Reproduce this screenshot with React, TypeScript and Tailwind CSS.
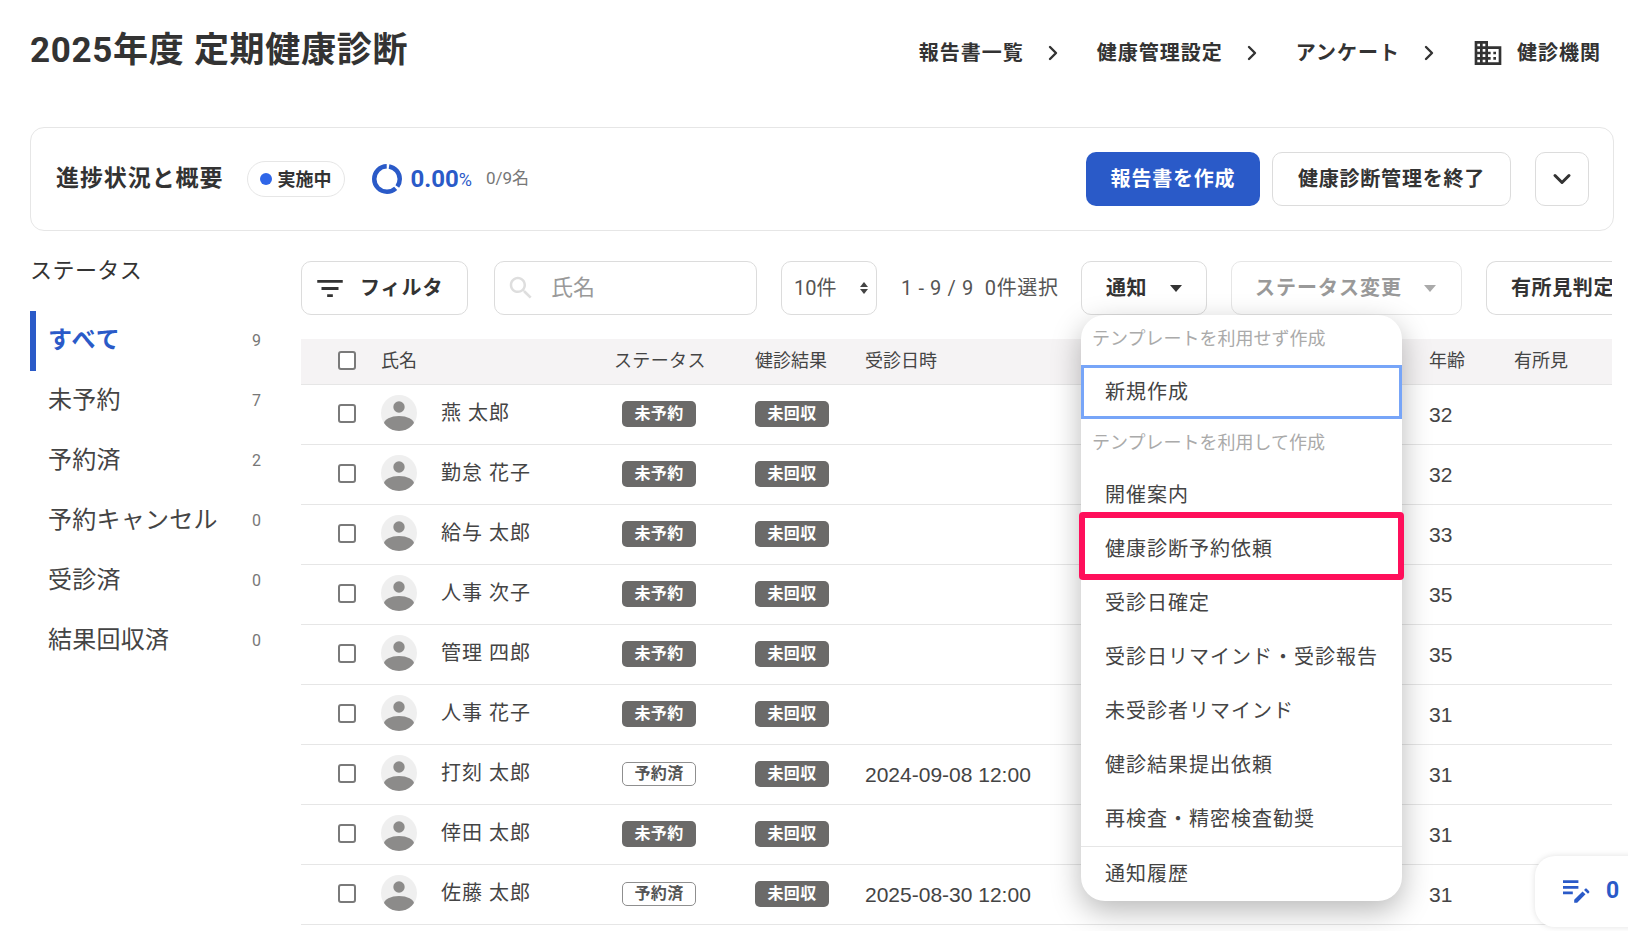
import React from 'react';
import { ChevronDown, ChevronRight } from 'lucide-react';

const sidebarItems = [
    { label: 'すべて', count: 9, active: true },
    { label: '未予約', count: 7 },
    { label: '予約済', count: 2 },
    { label: '予約キャンセル', count: 0 },
    { label: '受診済', count: 0 },
    { label: '結果回収済', count: 0 },
];

const rows = [
    { name: '燕 太郎', booked: false, date: '', age: 32 },
    { name: '勤怠 花子', booked: false, date: '', age: 32 },
    { name: '給与 太郎', booked: false, date: '', age: 33 },
    { name: '人事 次子', booked: false, date: '', age: 35 },
    { name: '管理 四郎', booked: false, date: '', age: 35 },
    { name: '人事 花子', booked: false, date: '', age: 31 },
    { name: '打刻 太郎', booked: true, date: '2024-09-08 12:00', age: 31 },
    { name: '倖田 太郎', booked: false, date: '', age: 31 },
    { name: '佐藤 太郎', booked: true, date: '2025-08-30 12:00', age: 31 },
];

const gridCols = 'grid grid-cols-[80px_60px_165px_106px_153px_564px_85px_1fr] items-center';

const Caret = ({ className }: { className: string }) => (
    <span className={`w-0 h-0 border-x-[6px] border-x-transparent border-t-[7px] ${className}`} />
);

const Checkbox = ({ className = '' }: { className?: string }) => (
    <span className={`block ml-[37px] w-[18px] h-[19px] rounded-[3px] border-2 border-[#7a7a7a] bg-white ${className}`} />
);

const Avatar = () => (
    <svg viewBox="0 0 36 36" className="w-[36px] h-[36px] -mt-[2px]">
        <defs>
            <clipPath id="avatar-clip">
                <circle cx="18" cy="18" r="18" />
            </clipPath>
        </defs>
        <circle cx="18" cy="18" r="18" fill="#efefef" />
        <g clipPath="url(#avatar-clip)" fill="#8c8b8a">
            <circle cx="18" cy="12" r="5.7" />
            <ellipse cx="18" cy="28.5" rx="15" ry="7.5" />
        </g>
    </svg>
);

const Badge = ({ label, outline }: { label: string; outline?: boolean }) =>
    outline ? (
        <span className="flex items-center justify-center w-[74px] h-[24px] rounded-[5px] border border-[#8f8f8f] bg-white text-[#555] text-[16px] font-bold tracking-[0.02em]">
            {label}
        </span>
    ) : (
        <span className="flex items-center justify-center w-[74px] h-[26px] rounded-[5px] bg-[#6b6a69] text-white text-[16px] font-bold tracking-[0.02em]">
            {label}
        </span>
    );

const NavLink = ({ label }: { label: string }) => (
    <div className="flex items-center gap-[17px]">
        <span className="text-[20px] font-bold tracking-[0.05em] text-[#333]">{label}</span>
        <ChevronRight className="w-[24px] h-[24px] text-[#333] mr-[32px]" strokeWidth={2.4} />
    </div>
);

const MenuItem = ({ label }: { label: string }) => (
    <div className="flex items-center h-[54px] pl-[24px] text-[20px] text-[#444] tracking-[0.05em]">{label}</div>
);

export default function App() {
    return (
        <div className="relative w-[1628px] h-[931px] overflow-hidden bg-white text-[#333] font-['Roboto','Noto_Sans_CJK_JP',sans-serif]">
            <header className="flex items-center justify-between h-[100px] pl-[30px] pr-[27px]">
                <h1 className="mt-[2px] text-[35px] font-bold tracking-[0.02em]">2025年度 定期健康診断</h1>
                <nav className="flex items-center mt-[5px]">
                    <NavLink label="報告書一覧" />
                    <NavLink label="健康管理設定" />
                    <NavLink label="アンケート" />
                    <svg viewBox="0 0 24 24" className="w-[32px] h-[32px] -ml-[1px] mr-[13px]" fill="#333">
                        <path d="M12 7V3H2v18h20V7H12zM6 19H4v-2h2v2zm0-4H4v-2h2v2zm0-4H4V9h2v2zm0-4H4V5h2v2zm4 12H8v-2h2v2zm0-4H8v-2h2v2zm0-4H8V9h2v2zm0-4H8V5h2v2zm10 12h-8v-2h2v-2h-2v-2h2v-2h-2V9h8v10zm-2-8h-2v2h2v-2zm0 4h-2v2h2v-2z" />
                    </svg>
                    <span className="text-[20px] font-bold tracking-[0.05em]">健診機関</span>
                </nav>
            </header>

            <section className="flex items-center justify-between h-[104px] mt-[27px] ml-[30px] mr-[14px] pl-[25px] pr-[24px] rounded-[14px] border border-[#e6e6e6]">
                <div className="flex items-center">
                    <h2 className="text-[23px] font-bold tracking-[0.04em]">進捗状況と概要</h2>
                    <span className="flex items-center gap-[5px] h-[36px] ml-[24px] pl-[12px] pr-[13px] rounded-full border border-[#e6e6e6] text-[18px] font-bold">
                        <span className="w-[12px] h-[12px] rounded-full bg-[#2f66e8]" />
                        実施中
                    </span>
                    <svg viewBox="0 0 30 30" className="w-[30px] h-[30px] ml-[27px]" fill="none" stroke="#2a5ac8" strokeWidth="4.5">
                        <circle cx="15" cy="15" r="12.75" strokeDasharray="8 2.4 49 2.4 18.3" />
                    </svg>
                    <span className="ml-[8px] text-[24px] font-bold text-[#2a5ac8]">0.00</span>
                    <span className="text-[18px] text-[#2a5ac8]">%</span>
                    <span className="ml-[14px] text-[17px] text-[#777]">0/9名</span>
                </div>
                <div className="flex items-center">
                    <button className="w-[174px] h-[54px] rounded-[10px] bg-[#2a5ac8] text-white text-[20px] font-bold tracking-[0.04em]">
                        報告書を作成
                    </button>
                    <button className="w-[239px] h-[54px] ml-[12px] rounded-[10px] border border-[#dcdcdc] text-[20px] font-bold tracking-[0.04em]">
                        健康診断管理を終了
                    </button>
                    <button className="flex items-center justify-center w-[54px] h-[54px] ml-[24px] rounded-[10px] border border-[#dcdcdc]">
                        <ChevronDown className="w-[28px] h-[28px]" strokeWidth={2.6} />
                    </button>
                </div>
            </section>

            <div className="flex mt-[30px] pl-[30px]">
                <aside className="w-[271px] shrink-0">
                    <div className="-mt-[1px] text-[22px] leading-[22px] tracking-[0.02em]">ステータス</div>
                    <ul className="mt-[29px]">
                        {sidebarItems.map((item) => (
                            <li
                                key={item.label}
                                className={`flex items-center justify-between h-[60px] pl-[12px] pr-[7px] border-l-[6px] w-[238px] ${item.active ? 'border-[#2a5ac8]' : 'border-transparent'}`}
                            >
                                <span className={`-mt-[2px] text-[24px] ${item.active ? 'font-bold text-[#2a5ac8] tracking-[0.05em]' : 'text-[#444] tracking-[0.01em]'}`}>
                                    {item.label}
                                </span>
                                <span className="text-[16px] text-[#777]">{item.count}</span>
                            </li>
                        ))}
                    </ul>
                </aside>

                <main className="w-[1311px] shrink-0 overflow-hidden">
                    <div className="flex items-center h-[54px]">
                        <button className="flex items-center shrink-0 w-[167px] h-[54px] pl-[15px] rounded-[10px] border border-[#dcdcdc]">
                            <svg viewBox="3 6 18 12" className="w-[26px] h-[17px]" fill="#333">
                                <path d="M10 18h4v-2h-4v2zM3 6v2h18V6H3zm3 7h12v-2H6v2z" />
                            </svg>
                            <span className="ml-[17px] text-[20px] font-bold tracking-[0.05em]">フィルタ</span>
                        </button>
                        <div className="flex items-center shrink-0 w-[263px] h-[54px] ml-[26px] pl-[11px] rounded-[10px] border border-[#dcdcdc]">
                            <svg viewBox="0 0 24 24" className="w-[30px] h-[30px]" fill="#dedede">
                                <path d="M15.5 14h-.79l-.28-.27C15.41 12.59 16 11.11 16 9.5 16 5.91 13.09 3 9.5 3S3 5.91 3 9.5 5.91 16 9.5 16c1.61 0 3.09-.59 4.23-1.57l.27.28v.79l5 4.99L20.49 19l-4.99-5zm-6 0C7.01 14 5 11.99 5 9.5S7.01 5 9.5 5 14 7.01 14 9.5 11.99 14 9.5 14z" />
                            </svg>
                            <span className="ml-[15px] -mt-[2px] text-[22px] text-[#999]">氏名</span>
                        </div>
                        <div className="flex items-center justify-between shrink-0 w-[96px] h-[54px] ml-[24px] pl-[12px] pr-[8px] rounded-[10px] border border-[#dcdcdc]">
                            <span className="text-[20px] text-[#555]">10件</span>
                            <span className="flex flex-col gap-[2px]">
                                <span className="w-0 h-0 border-x-[4px] border-x-transparent border-b-[5px] border-b-[#444]" />
                                <span className="w-0 h-0 border-x-[4px] border-x-transparent border-t-[5px] border-t-[#444]" />
                            </span>
                        </div>
                        <span className="shrink-0 ml-[24px] w-[180px] text-[20px] text-[#555] whitespace-nowrap tracking-[0.03em]">1 - 9 / 9&nbsp;&nbsp;0件選択</span>
                        <button className="flex items-center shrink-0 w-[126px] h-[54px] pl-[24px] rounded-[10px] border border-[#dcdcdc]">
                            <span className="text-[20px] font-bold tracking-[0.03em]">通知</span>
                            <Caret className="ml-[23px] border-t-[#333]" />
                        </button>
                        <button className="flex items-center shrink-0 w-[231px] h-[54px] ml-[24px] pl-[23px] rounded-[10px] border border-[#e6e6e6]">
                            <span className="text-[20px] font-bold tracking-[0.05em] text-[#999]">ステータス変更</span>
                            <Caret className="ml-[22px] border-t-[#aaa]" />
                        </button>
                        <button className="w-[150px] h-[54px] ml-[24px] pl-[24px] shrink-0 text-left whitespace-nowrap rounded-l-[10px] border border-r-0 border-[#dcdcdc]">
                            <span className="text-[20px] font-bold tracking-[0.03em]">有所見判定</span>
                        </button>
                    </div>

                    <div className="mt-[24px]">
                        <div className={`${gridCols} h-[46px] pb-[2px] bg-[#f5f3f4] border-b border-[#e6e6e6] text-[18px] text-[#444]`}>
                            <Checkbox />
                            <span className="col-span-2">氏名</span>
                            <span className="ml-[8px] tracking-[0.02em]">ステータス</span>
                            <span className="ml-[43px]">健診結果</span>
                            <span>受診日時</span>
                            <span>年齢</span>
                            <span>有所見</span>
                        </div>
                        {rows.map((row) => (
                            <div key={row.name} className={`${gridCols} h-[60px] pb-[1px] border-b border-[#e6e6e6]`}>
                                <Checkbox className="-mt-[2px]" />
                                <Avatar />
                                <span className="text-[20px] text-[#444] tracking-[0.05em] -mt-[3px]">{row.name}</span>
                                <span className="flex justify-center">
                                    <Badge label={row.booked ? '予約済' : '未予約'} outline={row.booked} />
                                </span>
                                <span className="ml-[43px]">
                                    <Badge label="未回収" />
                                </span>
                                <span className="mt-[2px] text-[21px] text-[#444] font-['Liberation_Sans',sans-serif]">{row.date}</span>
                                <span className="mt-[2px] text-[21px] text-[#444] font-['Liberation_Sans',sans-serif]">{row.age}</span>
                                <span />
                            </div>
                        ))}
                    </div>
                </main>
            </div>

            {/* notification dropdown */}
            <div className="absolute left-[1081px] top-[315px] w-[321px] h-[586px] rounded-[24px] bg-white shadow-[0_10px_30px_rgba(0,0,0,0.28)] overflow-hidden">
                <div className="flex items-center h-[46px] mb-[4px] pl-[11px] text-[18px] text-[#aaa]">テンプレートを利用せず作成</div>
                <div className="flex items-center h-[54px] pl-[21px] border-[3px] border-[#77a5f8] text-[20px] text-[#444] tracking-[0.05em]">新規作成</div>
                <div className="flex items-center h-[46px] pl-[11px] text-[18px] text-[#aaa]">テンプレートを利用して作成</div>
                <div className="mt-[3px]">
                    <MenuItem label="開催案内" />
                    <MenuItem label="健康診断予約依頼" />
                    <MenuItem label="受診日確定" />
                    <MenuItem label="受診日リマインド・受診報告" />
                    <MenuItem label="未受診者リマインド" />
                    <MenuItem label="健診結果提出依頼" />
                    <MenuItem label="再検査・精密検査勧奨" />
                </div>
                <div className="flex items-center h-[54px] pl-[24px] border-t border-[#e6e6e6] text-[20px] text-[#444] tracking-[0.05em]">
                    通知履歴
                </div>
            </div>
            <div className="absolute left-[1079px] top-[512px] w-[325px] h-[68px] rounded-[4px] border-[6px] border-[#ff0f5b]" />

            {/* floating counter */}
            <div className="absolute left-[1535px] top-[856px] w-[110px] h-[71px] flex items-center pl-[28px] rounded-l-[20px] bg-white shadow-[0_0_6px_rgba(0,0,0,0.12)]">
                <svg viewBox="3 6 20 16" className="w-[28px] h-[23px]" fill="#2a5ac8">
                    <path d="M3 10h11v2H3v-2zm0-2h11V6H3v2zm0 8h7v-2H3v2zm15.01-3.13.71-.71c.39-.39 1.02-.39 1.41 0l1.41 1.41c.39.39.39 1.02 0 1.41l-.71.71-2.82-2.82zm-1.06 1.06L11 19.88V22h2.12l5.95-5.95-2.12-2.12z" />
                </svg>
                <span className="ml-[15px] text-[23px] font-bold text-[#2a5ac8]">0</span>
            </div>
        </div>
    );
}
